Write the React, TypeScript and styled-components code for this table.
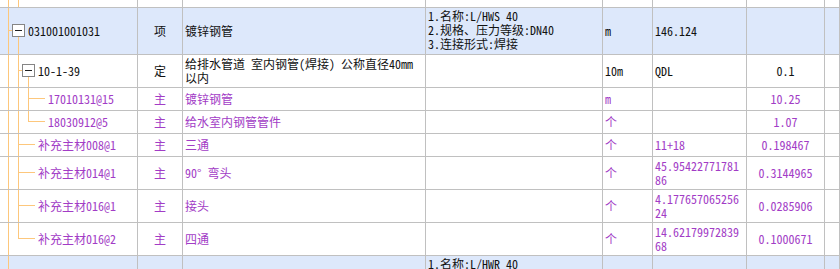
import React from "react";
import styled, {createGlobalStyle} from "styled-components";

const GlobalStyle = createGlobalStyle`
  html, body {
    margin: 0;
    padding: 0;
    background: #ffffff;
    overflow: hidden;
  }
  body {
    font-family: "Noto Sans Mono CJK SC", "Noto Sans CJK SC", sans-serif;
    font-size: 12px;
    color: #111;
  }
`;

const COLS = "138px 45px 243px 177px 50px 94px 78px 1fr";
const LINE = "#c0c0c0";
const PURPLE = "#a23cc6";
const ORANGE = "#fdc77c";
const BLUE = "#dde8fb";

const Sheet = styled.div`
  width: 840px;
  margin-top: -25px;
`;

const Row = styled.div<{ $h: number; $blue?: boolean }>`
  display: grid;
  grid-template-columns: ${COLS};
  height: ${p => p.$h + 1}px;
  box-sizing: border-box;
  border-bottom: 1px solid ${LINE};
  background: ${p => (p.$blue ? BLUE : "#ffffff")};
`;

const Cell = styled.div<{ $align?: "left" | "center"; $top?: boolean; $purple?: boolean }>`
  box-sizing: border-box;
  border-right: 1px solid ${LINE};
  display: flex;
  align-items: ${p => (p.$top ? "flex-start" : "center")};
  justify-content: ${p => (p.$align === "center" ? "center" : "flex-start")};
  padding: ${p => (p.$top ? "1px 2px 0" : "0 2px")};
  line-height: 14px;
  white-space: nowrap;
  overflow: hidden;
  color: ${p => (p.$purple ? PURPLE : "#111")};
  text-align: ${p => p.$align ?? "left"};
`;

const TreeWrap = styled.div<{ $purple?: boolean }>`
  box-sizing: border-box;
  border-right: 1px solid ${LINE};
  display: flex;
  align-items: stretch;
  overflow: hidden;
  white-space: nowrap;
  color: ${p => (p.$purple ? PURPLE : "#111")};
`;

const TreeLabel = styled.span`
  align-self: center;
  line-height: 14px;
`;

const Lines = styled.span`
  display: block;
`;

type TreeSpec = {
  full: number[];
  half?: number;
  stub?: [number, number];
  box?: number;
  indent: number;
};

const TreeCell: React.FC<{ h: number; spec: TreeSpec; label?: string; purple?: boolean }> = ({h, spec, label, purple}) => {
  const mid = Math.floor((h - 1) / 2);
  return (
    <TreeWrap $purple={purple}>
      <svg width={spec.indent} height={h} shapeRendering="crispEdges" style={{flex: "none"}}>
        {spec.full.map(x => (
          <line key={x} x1={x + 0.5} y1={0} x2={x + 0.5} y2={h} stroke={ORANGE}/>
        ))}
        {spec.half !== undefined && (
          <line x1={spec.half + 0.5} y1={0} x2={spec.half + 0.5} y2={mid + 1} stroke={ORANGE}/>
        )}
        {spec.stub && (
          <line x1={spec.stub[0]} y1={mid + 0.5} x2={spec.stub[1]} y2={mid + 0.5} stroke={ORANGE}/>
        )}
        {spec.box !== undefined && (
          <g>
            <line x1={spec.box + 6.5} y1={mid + 6} x2={spec.box + 6.5} y2={h} stroke={ORANGE}/>
            <rect x={spec.box + 0.5} y={mid - 5.5} width={12} height={12} fill="#ffffff" stroke="#858585"/>
            <line x1={spec.box + 3} y1={mid + 0.5} x2={spec.box + 10} y2={mid + 0.5} stroke="#222"/>
          </g>
        )}
      </svg>
      {label && <TreeLabel>{label}</TreeLabel>}
    </TreeWrap>
  );
};

type RowData = {
  h: number;
  blue?: boolean;
  purple?: boolean;
  tree: TreeSpec;
  code?: string;
  kind?: string;
  name?: string[];
  desc?: string[];
  unit?: string;
  expr?: string[];
  qty?: string;
};

const rows: RowData[] = [
  {h: 32, purple: true, tree: {full: [8, 18], indent: 40}, kind: "主", name: ["镀锌钢管管件"], unit: "个"},
  {
    h: 46, blue: true, tree: {full: [8], stub: [8, 12], box: 12, indent: 28},
    code: "031001001031", kind: "项", name: ["镀锌钢管"],
    desc: ["1.名称:L/HWS 40", "2.规格、压力等级:DN40", "3.连接形式:焊接"], unit: "m", expr: ["146.124"],
  },
  {
    h: 32, tree: {full: [8, 18], stub: [18, 22], box: 22, indent: 38},
    code: "10-1-39", kind: "定", name: ["给排水管道 室内钢管(焊接) 公称直径40mm", "以内"],
    unit: "10m", expr: ["QDL"], qty: "0.1",
  },
  {h: 22, purple: true, tree: {full: [8, 18, 28], stub: [28, 45], indent: 48}, code: "17010131@15", kind: "主", name: ["镀锌钢管"], unit: "m", qty: "10.25"},
  {h: 22, purple: true, tree: {full: [8, 18], half: 28, stub: [28, 45], indent: 48}, code: "18030912@5", kind: "主", name: ["给水室内钢管管件"], unit: "个", qty: "1.07"},
  {h: 22, purple: true, tree: {full: [8, 18], stub: [18, 35], indent: 38}, code: "补充主材008@1", kind: "主", name: ["三通"], unit: "个", expr: ["11+18"], qty: "0.198467"},
  {h: 32, purple: true, tree: {full: [8, 18], stub: [18, 35], indent: 38}, code: "补充主材014@1", kind: "主", name: ["90° 弯头"], unit: "个", expr: ["45.95422771781", "86"], qty: "0.3144965"},
  {h: 32, purple: true, tree: {full: [8, 18], stub: [18, 35], indent: 38}, code: "补充主材016@1", kind: "主", name: ["接头"], unit: "个", expr: ["4.177657065256", "24"], qty: "0.0285906"},
  {h: 32, purple: true, tree: {full: [8], half: 18, stub: [18, 35], indent: 38}, code: "补充主材016@2", kind: "主", name: ["四通"], unit: "个", expr: ["14.62179972839", "68"], qty: "0.1000671"},
  {h: 46, blue: true, tree: {full: [8], indent: 28}, desc: ["1.名称:L/HWR 40", "2.规格、压力等级:DN40", "3.连接形式:焊接"]},
];

const Multi: React.FC<{ lines?: string[] }> = ({lines}) => (
  <Lines>
    {(lines ?? []).map((l, i) => (
      <React.Fragment key={i}>
        {i > 0 && <br/>}
        {l}
      </React.Fragment>
    ))}
  </Lines>
);

export default function App() {
  return (
    <>
      <GlobalStyle/>
      <Sheet>
        {rows.map((r, i) => (
          <Row key={i} $h={r.h} $blue={r.blue}>
            <TreeCell h={r.h} spec={r.tree} label={r.code} purple={r.purple}/>
            <Cell $align="center" $purple={r.purple}>{r.kind}</Cell>
            <Cell $purple={r.purple}><Multi lines={r.name}/></Cell>
            <Cell $top $purple={r.purple}><Multi lines={r.desc}/></Cell>
            <Cell $purple={r.purple}>{r.unit}</Cell>
            <Cell $purple={r.purple}><Multi lines={r.expr}/></Cell>
            <Cell $align="center" $purple={r.purple}>{r.qty}</Cell>
            <Cell/>
          </Row>
        ))}
      </Sheet>
    </>
  );
}
